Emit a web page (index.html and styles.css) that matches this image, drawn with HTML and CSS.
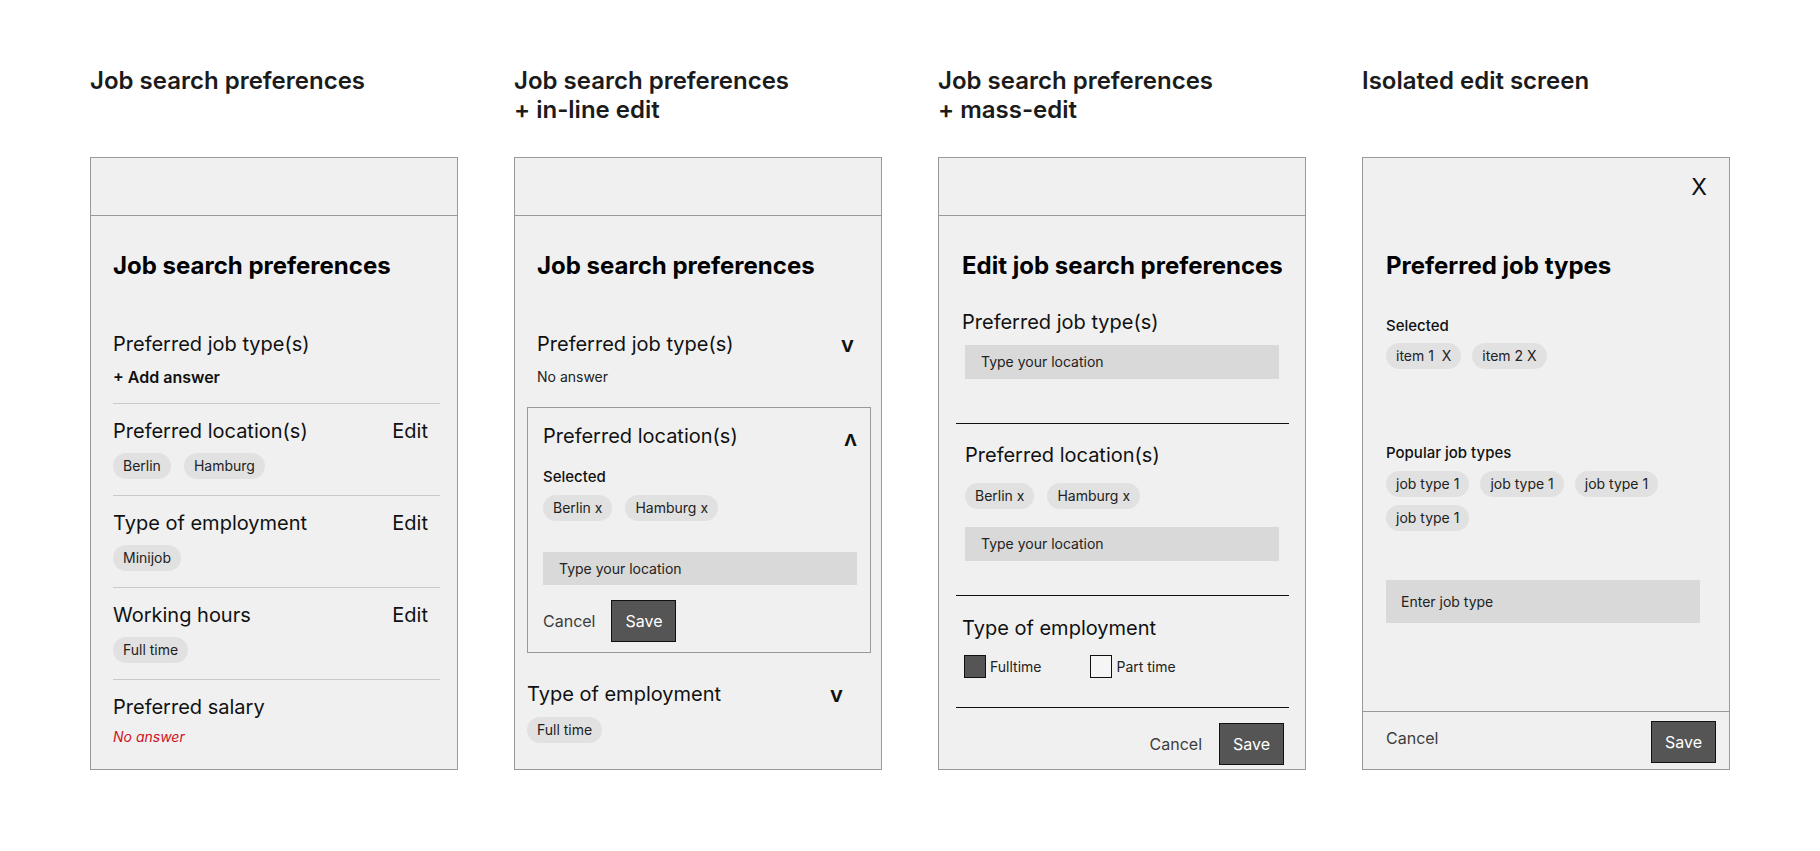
FILE: index.html
```html
<!DOCTYPE html>
<html lang="en">
<head>
<meta charset="utf-8">
<title>Job search preferences – edit patterns</title>
<link rel="stylesheet" href="styles.css">
</head>
<body>
<div class="board">

  <section class="col">
    <h1 class="col-title">Job search preferences</h1>
    <div class="phone">
      <div class="phone-top"></div>
      <div class="phone-body p1">
        <h2 class="screen-title">Job search preferences</h2>
        <div class="pref-list">
          <div class="pref">
            <div class="pref-head"><span class="pref-label">Preferred job type(s)</span></div>
            <div class="add-answer">+ Add answer</div>
          </div>
          <div class="pref">
            <div class="pref-head"><span class="pref-label">Preferred location(s)</span><span class="edit">Edit</span></div>
            <div class="chips"><span class="chip">Berlin</span><span class="chip">Hamburg</span></div>
          </div>
          <div class="pref">
            <div class="pref-head"><span class="pref-label">Type of employment</span><span class="edit">Edit</span></div>
            <div class="chips"><span class="chip">Minijob</span></div>
          </div>
          <div class="pref">
            <div class="pref-head"><span class="pref-label">Working hours</span><span class="edit">Edit</span></div>
            <div class="chips"><span class="chip">Full time</span></div>
          </div>
          <div class="pref">
            <div class="pref-head"><span class="pref-label">Preferred salary</span></div>
            <div class="missing">No answer</div>
          </div>
        </div>
      </div>
    </div>
  </section>

  <section class="col">
    <h1 class="col-title">Job search preferences<br>+ in-line edit</h1>
    <div class="phone">
      <div class="phone-top"></div>
      <div class="phone-body p2">
        <h2 class="screen-title">Job search preferences</h2>
        <div class="acc acc-first">
          <div class="acc-head"><span class="pref-label">Preferred job type(s)</span><span class="chev">v</span></div>
          <div class="muted">No answer</div>
        </div>
        <div class="acc-open">
          <div class="acc-head"><span class="pref-label">Preferred location(s)</span><span class="chev chev-up">v</span></div>
          <div class="small-label">Selected</div>
          <div class="chips chips-tight"><span class="chip">Berlin x</span><span class="chip">Hamburg x</span></div>
          <div class="field field-inline">Type your location</div>
          <div class="actions">
            <span class="cancel">Cancel</span>
            <span class="save">Save</span>
          </div>
        </div>
        <div class="acc acc-last">
          <div class="acc-head"><span class="pref-label">Type of employment</span><span class="chev">v</span></div>
          <div class="chips chips-after"><span class="chip">Full time</span></div>
        </div>
      </div>
    </div>
  </section>

  <section class="col">
    <h1 class="col-title">Job search preferences<br>+ mass-edit</h1>
    <div class="phone">
      <div class="phone-top"></div>
      <div class="phone-body p3">
        <h2 class="screen-title">Edit job search preferences</h2>
        <div class="mass mass-a">
          <div class="pref-label">Preferred job type(s)</div>
          <div class="field field-mass">Type your location</div>
        </div>
        <div class="mass mass-b">
          <div class="pref-label">Preferred location(s)</div>
          <div class="chips chips-mass"><span class="chip">Berlin x</span><span class="chip">Hamburg x</span></div>
          <div class="field field-mass field-after-chips">Type your location</div>
        </div>
        <div class="mass mass-c">
          <div class="pref-label">Type of employment</div>
          <div class="checks">
            <label class="check"><span class="box box-on"></span>Fulltime</label>
            <label class="check"><span class="box"></span>Part time</label>
          </div>
        </div>
        <div class="mass-footer">
          <span class="cancel">Cancel</span>
          <span class="save">Save</span>
        </div>
      </div>
    </div>
  </section>

  <section class="col">
    <h1 class="col-title">Isolated edit screen</h1>
    <div class="phone">
      <div class="phone-body p4">
        <div class="close-row"><span class="close">X</span></div>
        <h2 class="screen-title">Preferred job types</h2>
        <div class="small-label sel-label">Selected</div>
        <div class="chips chips-p4"><span class="chip">item 1&nbsp; X</span><span class="chip">item 2 X</span></div>
        <div class="small-label pop-label">Popular job types</div>
        <div class="chips chips-p4 chips-pop"><span class="chip">job type 1</span><span class="chip">job type 1</span><span class="chip">job type 1</span><span class="chip">job type 1</span></div>
        <div class="field field-big">Enter job type</div>
      </div>
      <div class="p4-footer">
        <span class="cancel cancel-top">Cancel</span>
        <span class="save">Save</span>
      </div>
    </div>
  </section>

</div>
</body>
</html>
```

FILE: styles.css
```css
* { box-sizing: border-box; }

body {
  margin: 0;
  background: #ffffff;
  font-family: Inter, "Noto Sans", "Liberation Sans", sans-serif;
  color: #111;
}

.board {
  display: flex;
  gap: 56px;
  padding: 66px 0 0 90px;
}

.col { width: 368px; flex: none; }

.col-title {
  margin: 0;
  height: 91px;
  font-size: 24px;
  line-height: 29px;
  font-weight: 600;
  color: #1b1b1b;
}

.phone {
  height: 613px;
  border: 1px solid #999;
  background: #f0f0f0;
  display: flex;
  flex-direction: column;
}

.phone-top {
  flex: none;
  height: 58px;
  border-bottom: 1px solid #999;
}

.phone-body { flex: 1; }

.screen-title {
  margin: 0;
  font-size: 24px;
  line-height: 29px;
  font-weight: 700;
  color: #000;
}

.pref-label {
  font-size: 20px;
  line-height: 24px;
  color: #111;
}

.chips {
  display: flex;
  flex-wrap: wrap;
  gap: 8px 13px;
  margin-top: 10px;
}

.chip {
  height: 26px;
  line-height: 26px;
  padding: 0 10px;
  border-radius: 13px;
  background: #e1e1e1;
  font-size: 14px;
  color: #222;
  white-space: nowrap;
}

.small-label {
  font-size: 15px;
  line-height: 18px;
  font-weight: 500;
  color: #111;
}

.field {
  height: 33px;
  line-height: 33px;
  background: #d9d9d9;
  padding-left: 16px;
  font-size: 14px;
  color: #222;
}

.cancel {
  font-size: 16px;
  line-height: 24px;
  color: #3d3d3d;
}

.save {
  width: 65px;
  height: 42px;
  line-height: 40px;
  text-align: center;
  background: #555;
  border: 1px solid #111;
  color: #fff;
  font-size: 16px;
}

/* Panel 1 */
.p1 { padding: 35px 17px 0 22px; }
.p1 .screen-title { margin-bottom: 37px; }

.pref {
  padding: 15px 0 16px;
  border-bottom: 1px solid #c9c9c9;
}
.pref:last-child { border-bottom: none; }

.pref-head {
  display: flex;
  justify-content: space-between;
  align-items: center;
  padding-right: 12px;
}

.edit {
  font-size: 20px;
  line-height: 24px;
  color: #111;
}

.add-answer {
  margin-top: 12px;
  font-size: 16px;
  line-height: 19px;
  font-weight: 600;
  color: #111;
}

.missing {
  margin-top: 9px;
  font-size: 14px;
  line-height: 17px;
  font-style: italic;
  color: #d0101e;
}

/* Panel 2 */
.p2 { padding: 35px 10px 0 12px; }
.p2 .screen-title { padding-left: 10px; margin-bottom: 37px; }

.acc-head {
  display: flex;
  justify-content: space-between;
  align-items: flex-start;
}

.chev {
  display: inline-block;
  font-size: 22px;
  line-height: 24px;
  font-weight: 600;
  color: #111;
}
.chev-up { transform: translateY(6px) rotate(180deg); }

.acc-first { padding: 15px 17px 0 10px; }

.muted {
  margin-top: 12px;
  font-size: 14px;
  line-height: 17px;
  color: #222;
}

.acc-open {
  margin-top: 22px;
  border: 1px solid #999;
  padding: 16px 13px 10px 15px;
}
.acc-open .small-label { margin-top: 20px; }
.chips-tight { margin-top: 9px; }
.field-inline { margin-top: 31px; }

.actions {
  margin-top: 15px;
  display: flex;
  align-items: center;
  gap: 16px;
}

.acc-last { margin-top: 29px; padding: 0 28px 0 0; }
.chips-after { margin-top: 11px; }

/* Panel 3 */
.p3 { padding: 35px 16px 0 17px; }
.p3 .screen-title { padding-left: 6px; margin-bottom: 30px; }

.mass { border-bottom: 1px solid #111; }
.mass-a { padding: 0 0 44px 6px; }
.mass-a .field-mass { margin-left: 3px; }
.mass-b { padding: 19px 0 34px 9px; }
.mass-c { padding: 20px 0 29px 6px; }

.field-mass {
  width: 314px;
  height: 34px;
  line-height: 34px;
  margin-top: 11px;
}
.chips-mass { margin-top: 16px; }
.field-after-chips { margin-top: 18px; }

.checks {
  margin-top: 15px;
  display: flex;
  gap: 49px;
  padding-left: 2px;
}
.check {
  display: flex;
  align-items: center;
  gap: 4px;
  font-size: 14px;
  color: #222;
}
.box {
  width: 22px;
  height: 23px;
  border: 1px solid #111;
  background: #f5f5f5;
}
.box-on { background: #555; }

.mass-footer {
  padding: 15px 5px 0 0;
  display: flex;
  justify-content: flex-end;
  align-items: center;
  gap: 17px;
}

/* Panel 4 */
.p4 { padding: 15px 22px 0 23px; }
.close-row { text-align: right; }
.close {
  font-size: 23px;
  line-height: 28px;
  color: #111;
}
.p4 .screen-title { margin-top: 50px; }
.sel-label { margin-top: 37px; }
.chips-p4 { margin-top: 8px; gap: 8px 11px; }
.pop-label { margin-top: 75px; }
.chips-pop { margin-top: 9px; }

.field-big {
  width: 314px;
  height: 43px;
  line-height: 43px;
  margin-top: 49px;
  padding-left: 15px;
}

.p4-footer {
  flex: none;
  height: 58px;
  border-top: 1px solid #999;
  padding: 9px 13px 0 23px;
  display: flex;
  justify-content: space-between;
  align-items: flex-start;
}
.cancel-top { margin-top: 5px; }
```
